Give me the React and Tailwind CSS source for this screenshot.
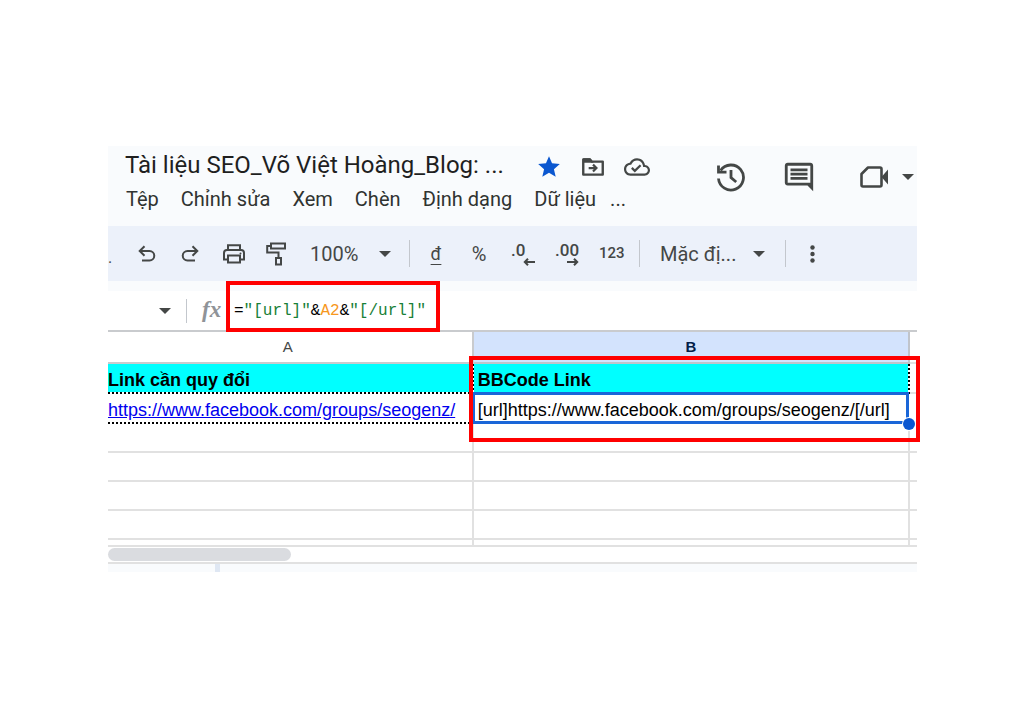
import React from "react";

const Svg = ({ className, children, viewBox = "0 0 24 24" }) => (
  <svg className={className} viewBox={viewBox} fill="none" stroke="currentColor" strokeWidth="2" aria-hidden="true">
    {children}
  </svg>
);

const Caret = () => (
  <svg className="h-[6px] w-[12px] shrink-0" viewBox="0 0 12 6" fill="currentColor" aria-hidden="true">
    <path d="M0 0h12L6 6z" />
  </svg>
);

const StarIcon = () => (
  <svg className="size-[26px]" viewBox="0 0 24 24" fill="currentColor" aria-hidden="true">
    <path d="M12 17.27 18.18 21l-1.64-7.03L22 9.24l-7.19-.61L12 2 9.19 8.63 2 9.24l5.46 4.73L5.82 21z" />
  </svg>
);

const FolderMoveIcon = () => (
  <Svg className="size-[26px]">
    <path d="M3 5h6l2 2h10v12H3z" strokeLinejoin="round" strokeWidth="2.200" />
    <path d="M3 4h6.500l3 4H3z" fill="currentColor" stroke="none" />
    <path d="M8 13h7M12 9.800l3.200 3.200-3.200 3.200" />
  </Svg>
);

const CloudDoneIcon = () => (
  <svg className="size-[26px]" viewBox="0 0 24 24" fill="currentColor" aria-hidden="true">
    <path d="M19.350 10.040C18.670 6.590 15.640 4 12 4 9.110 4 6.600 5.640 5.350 8.040 2.340 8.360 0 10.910 0 14c0 3.310 2.690 6 6 6h13c2.760 0 5-2.240 5-5 0-2.640-2.050-4.780-4.650-4.960zM19 18H6c-2.210 0-4-1.790-4-4 0-2.050 1.530-3.760 3.560-3.970l1.070-.11.5-.95C8.080 7.140 9.940 6 12 6c2.620 0 4.880 1.860 5.390 4.430l.3 1.500 1.530.11c1.560.1 2.780 1.410 2.780 2.960 0 1.650-1.350 3-3 3zm-9-3.820-2.090-2.090L6.500 13.500 10 17l6.010-6.010-1.410-1.410z" />
  </svg>
);

const HistoryIcon = () => (
  <Svg className="size-[30px]" viewBox="0 0 30 30">
    <path d="M2.500 16.500A12.500 12.500 0 1 0 4.600 8.500" strokeWidth="2.800" />
    <path d="M2.500 3.500V10.200H10.500" strokeWidth="2.800" />
    <path d="M15 8v7.500l5.200 4.500" strokeWidth="2.800" />
  </Svg>
);

const CommentIcon = () => (
  <svg className="size-[34px]" viewBox="0 0 24 24" fill="currentColor" aria-hidden="true">
    <path d="M21.990 4c0-1.100-.89-2-1.990-2H4c-1.100 0-2 .9-2 2v12c0 1.100.9 2 2 2h14l4 4-.01-18zM20 4v12H4V4h16zM6 12h12v2H6zm0-3h12v2H6zm0-3h12v2H6z" />
  </svg>
);

const VideoIcon = () => (
  <Svg className="h-[24px] w-[28px]" viewBox="0 0 28 24">
    <path d="M8 2.500h12a1.500 1.500 0 0 1 1.500 1.500v16a1.500 1.500 0 0 1-1.500 1.500H3A1.500 1.500 0 0 1 1.500 20V9z" strokeWidth="2.600" strokeLinejoin="round" />
    <path d="M21.500 12l6.500-7.500v15z" fill="currentColor" stroke="none" />
  </Svg>
);

const UndoIcon = () => (
  <Svg className="h-[18px] w-[18px]" viewBox="0 0 18 18">
    <path d="M2 6h9.500a4.700 4.700 0 0 1 0 9.500H4" />
    <path d="M6.500 1.200L1.700 6l4.800 4.800" />
  </Svg>
);

const RedoIcon = () => (
  <Svg className="h-[18px] w-[18px]" viewBox="0 0 18 18">
    <path d="M16 6H6.500a4.700 4.700 0 0 0 0 9.500H14" />
    <path d="M11.500 1.200L16.300 6l-4.800 4.800" />
  </Svg>
);

const PrintIcon = () => (
  <Svg className="h-[20px] w-[24px]" viewBox="0 0 24 20">
    <path d="M6 6V1.200h12V6" />
    <path d="M6 15.500H2V9a3 3 0 0 1 3-3h14a3 3 0 0 1 3 3v6.500h-4" />
    <path d="M6 11.500h12v7H6z" />
    <circle cx="18.500" cy="9.500" r="1" fill="currentColor" stroke="none" />
  </Svg>
);

const PaintIcon = () => (
  <Svg className="h-[24px] w-[20px]" viewBox="0 0 20 24">
    <path d="M5 1.500h14v5H5z" />
    <path d="M5 4H1.200v6.500h11.300V16" />
    <path d="M10 16h5v6.500h-5z" />
  </Svg>
);

const DecimalArrow = ({ right }) => (
  <Svg className="h-[8px] w-[12px]" viewBox="0 0 12 8">
    {right ? <path d="M0 4h10M7 .8L10.200 4 7 7.200" /> : <path d="M12 4H2M5 .8L1.800 4 5 7.200" />}
  </Svg>
);

const MENUS = ["Tệp", "Chỉnh sửa", "Xem", "Chèn", "Định dạng", "Dữ liệu"];

const Divider = () => <span className="h-[27px] w-px shrink-0 bg-[#c3c7cd]" />;

function Header() {
  return (
    <header className="flex items-start justify-between bg-[#f9fbfd] pb-[15px] pl-[17px] pt-[3px]">
      <div>
        <div className="flex items-center">
          <h1 className="w-[411px] whitespace-nowrap text-[24px] leading-8 text-[#1f1f1f]">Tài liệu SEO_Võ Việt Hoàng_Blog: ...</h1>
          <div className="flex items-center gap-[18px] pt-[4px] text-[#444746]">
            <button aria-label="Gắn dấu sao" className="text-[#0b57d0]"><StarIcon /></button>
            <button aria-label="Di chuyển"><FolderMoveIcon /></button>
            <button aria-label="Trạng thái tài liệu"><CloudDoneIcon /></button>
          </div>
        </div>
        <nav className="flex gap-[22px] pl-px pt-[6px] text-[20px] leading-6 text-[#303331]">
          {MENUS.map((m) => (
            <button key={m} className="whitespace-nowrap">{m}</button>
          ))}
          <button aria-label="Menu khác" className="-ml-2">...</button>
        </nav>
      </div>
      <div className="flex items-center pr-[3px] pt-[11px] text-[#444746]">
        <button aria-label="Lịch sử" className="mr-[36px]"><HistoryIcon /></button>
        <button aria-label="Nhận xét" className="mr-[44px]"><CommentIcon /></button>
        <button aria-label="Cuộc gọi" className="flex items-center gap-[14px]"><VideoIcon /><Caret /></button>
      </div>
    </header>
  );
}

function Toolbar() {
  return (
    <div role="toolbar" className="flex h-[55px] items-center bg-[#ecf1fa] text-[20px] text-[#444746]">
      <span className="w-[30px] pt-[8px] text-[16px]">.</span>
      <button aria-label="Hoàn tác" className="mr-[25px]"><UndoIcon /></button>
      <button aria-label="Làm lại" className="mr-[23px]"><RedoIcon /></button>
      <button aria-label="In" className="mr-[20px]"><PrintIcon /></button>
      <button aria-label="Sao chép định dạng" className="mr-[24px]"><PaintIcon /></button>
      <button className="flex w-[99px] items-center justify-between pr-[18px]">100%<Caret /></button>
      <Divider />
      <button className="w-[52px] text-[18px] underline underline-offset-4">đ</button>
      <button className="w-[34px]">%</button>
      <button aria-label="Giảm số thập phân" className="ml-[15px] flex w-[24px] flex-col items-end text-[17px] font-medium leading-4">
        <span className="self-start">.0</span>
        <DecimalArrow />
      </button>
      <button aria-label="Tăng số thập phân" className="ml-[20px] flex w-[24px] flex-col items-end text-[17px] font-medium leading-4">
        <span className="self-start">.00</span>
        <DecimalArrow right />
      </button>
      <button className="ml-[20px] mr-[15px] w-[25px] text-[15px] font-medium">123</button>
      <Divider />
      <button className="flex w-[145px] items-center justify-between pl-[20px] pr-[20px]">Mặc đị...<Caret /></button>
      <Divider />
      <button aria-label="Thêm" className="pl-[24px]">
        <svg className="h-[18px] w-[5px]" viewBox="0 0 5 18" fill="currentColor" aria-hidden="true">
          <circle cx="2.500" cy="2.500" r="2.200" /><circle cx="2.500" cy="9" r="2.200" /><circle cx="2.500" cy="15.500" r="2.200" />
        </svg>
      </button>
    </div>
  );
}

function FormulaBar() {
  return (
    <div className="border-t-[10px] border-[#f9fbfd]">
      <div className="flex h-[39px] items-center text-[#444746]">
        <button aria-label="Hộp tên" className="ml-[51px] mr-[15px]"><Caret /></button>
        <span className="h-[24px] w-px bg-[#c3c7cd]" />
        <span className="ml-[15px] w-[20px] font-['Liberation_Serif',serif] text-[23px] font-bold italic text-[#8f9398]">fx</span>
        <div className="relative ml-[12px]">
          <div role="textbox" aria-label="Công thức" className="whitespace-nowrap font-['Liberation_Mono',monospace] text-[16px] text-black">
            =<span className="text-[#188038]">"[url]"</span>&amp;<span className="text-[#f7981d]">A2</span>&amp;<span className="text-[#188038]">"[/url]"</span>
          </div>
          <div className="pointer-events-none absolute -bottom-[9px] -left-[8px] -right-[14px] -top-[18px] z-10 border-4 border-[#ff0000]" />
        </div>
      </div>
    </div>
  );
}

function Sheet() {
  return (
    <table className="w-full table-fixed border-separate border-spacing-0 border-t-2 border-[#c9cbce] font-['Liberation_Sans',sans-serif] text-[18px] leading-6 text-black">
      <colgroup>
        <col className="w-[45.200%]" />
        <col />
        <col className="w-[7px]" />
      </colgroup>
      <thead>
        <tr className="h-[32px] text-[15px]">
          <th scope="col" className="border-b-2 border-r-2 border-[#c9cbce] p-0 pr-1 font-normal text-[#444746]">A</th>
          <th scope="col" className="border-b-2 border-r-2 border-[#c0c4cb] bg-[#d3e3fd] p-0 font-bold text-[#041e49]">B</th>
          <td className="border-b-2 border-[#e1e1e1] p-0" />
        </tr>
      </thead>
      <tbody>
        <tr className="h-[30px] align-bottom">
          <td className="border-b-2 border-r-2 border-dotted border-black bg-[#00ffff] bg-clip-padding p-0 font-bold">Link cần quy đổi</td>
          <td className="border-b-2 border-r-2 border-dotted border-black bg-[#00ffff] bg-clip-padding p-0 pl-[4px] font-bold">BBCode Link</td>
          <td className="border-b-2 border-[#e1e1e1] p-0" />
        </tr>
        <tr className="h-[30px] align-bottom">
          <td className="whitespace-nowrap border-b-2 border-r-2 border-b-black border-r-[#e1e1e1] p-0 [border-bottom-style:dotted]">
            <a href="https://www.facebook.com/groups/seogenz/" className="text-[#0000ee] underline">https://www.facebook.com/groups/seogenz/</a>
          </td>
          <td className="relative whitespace-nowrap border-b-2 border-r-2 border-transparent p-0 pl-[4px]">
            [url]https://www.facebook.com/groups/seogenz/[/url]
            <div className="pointer-events-none absolute -bottom-[2px] -left-[2px] -right-px -top-[2px] border-[3px] border-[#1a66d8]" />
            <div className="absolute -bottom-[8px] -right-[7px] size-[12px] rounded-full bg-[#0b57d0] ring-1 ring-white" />
            <div className="pointer-events-none absolute -bottom-[20px] -left-[5px] -right-[12px] -top-[38px] z-10 border-4 border-[#ff0000]" />
          </td>
          <td className="p-0" />
        </tr>
        {[0, 1, 2, 3].map((r) => (
          <tr key={r} className="h-[29px]">
            <td className="border-b-2 border-r-2 border-[#e1e1e1] p-0" />
            <td className="border-b-2 border-r-2 border-[#e1e1e1] p-0" />
            <td className="border-b-2 border-[#e1e1e1] p-0" />
          </tr>
        ))}
        <tr className="h-[7px]">
          <td className="border-b-2 border-r-2 border-[#e1e1e1] p-0" />
          <td className="border-b-2 border-r-2 border-[#e1e1e1] p-0" />
          <td className="border-b-2 border-[#e1e1e1] p-0" />
        </tr>
      </tbody>
    </table>
  );
}

export default function App() {
  return (
    <main className="min-h-screen bg-white pb-[140px] pl-[108px] pr-[107px] pt-[146px] font-['Roboto',sans-serif]">
      <Header />
      <Toolbar />
      <FormulaBar />
      <Sheet />
      <div className="border-b-2 border-[#e1e1e1] py-[1px]">
        <div className="h-[13px] w-[22.600%] rounded-full bg-[#dadce0]" />
      </div>
      <footer className="h-[8px] bg-[#f9fbfd] pl-[107px]">
        <div className="h-full w-[5px] bg-[#dfe7f3]" />
      </footer>
    </main>
  );
}
